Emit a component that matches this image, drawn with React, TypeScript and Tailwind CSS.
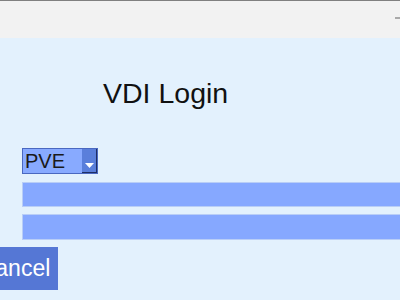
export default function App() {
  return (
    <div className="w-[400px] h-[300px] overflow-hidden bg-[#e3f1fd] font-['Liberation_Sans',Arial,sans-serif]">
      {/* window title strip */}
      <div className="h-[38px] bg-[#f2f2f2] border-t border-[#808080] flex justify-end pt-[16px]">
        <div className="w-[5px] h-[2px] bg-[#a9a9a9]" />
      </div>

      <div className="flex flex-col">
        <h1 className="mt-[39px] ml-[103px] text-[28.5px] leading-[32px] text-[#111]">VDI Login</h1>

        <div className="mt-[39px] ml-[22px] w-[76px] h-[26px] flex border border-[#4a68c0] bg-[#88aaff]">
          <span className="flex-1 pl-[2px] text-[20px] leading-[24px] text-[#1a1a1a]">PVE</span>
          <span className="w-[15px] flex items-end justify-center pb-[3px] bg-[#5a7fdb] border-r border-b border-[#1f2f66]">
            <svg width="9" height="6" viewBox="0 0 9 6">
              <polygon points="0,0 9,0 4.5,5" fill="#fff" />
            </svg>
          </span>
        </div>

        <div className="mt-[8px] ml-[22px] h-[25px] w-[400px] bg-[#86a8ff] border border-[#b9cef7]" />
        <div className="mt-[7px] ml-[22px] h-[26px] w-[400px] bg-[#86a8ff] border border-[#b9cef7]" />

        <div className="mt-[7px] ml-[-29px] w-[87px] h-[43px] flex items-center justify-center bg-[#5577d5] text-white text-[23px]">
          Cancel
        </div>
      </div>
    </div>
  )
}
